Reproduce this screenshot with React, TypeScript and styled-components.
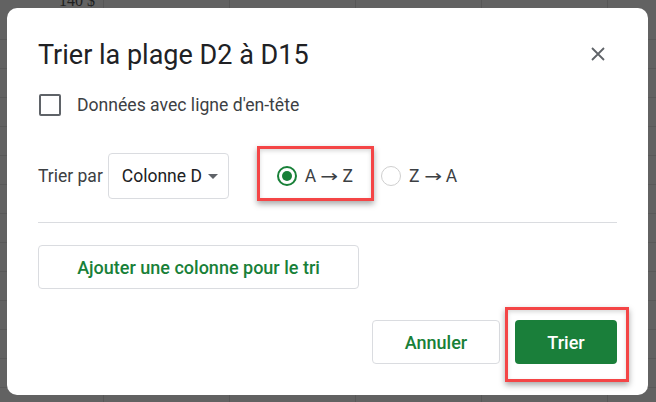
import React, { useState } from 'react';
import styled, { createGlobalStyle } from 'styled-components';

const GlobalStyle = createGlobalStyle`
  html, body {
    margin: 0;
    padding: 0;
    width: 656px;
    height: 402px;
    overflow: hidden;
  }
  body {
    font-family: Roboto, 'Liberation Sans', Arial, sans-serif;
    background-color: #626262;
    background-image:
      repeating-linear-gradient(90deg, transparent 0 103px, #575757 103px 104px, transparent 104px 126px),
      repeating-linear-gradient(0deg, transparent 0 28px, #595959 28px 29px);
    background-position: 0 0, 0 14px;
  }
`;

const Backdrop = styled.div`
  position: relative;
  width: 656px;
  height: 402px;
  padding: 8px 8px 7px 7px;
  box-sizing: border-box;
`;

const PeekText = styled.span`
  position: absolute;
  top: -8px;
  left: 59px;
  font-family: 'Liberation Serif', 'Times New Roman', serif;
  font-size: 16px;
  color: #1f1f1f;
`;

const Dialog = styled.div`
  position: relative;
  height: 100%;
  background: #ffffff;
  border-radius: 10px;
  padding: 31px 31px 0 31px;
  box-sizing: border-box;
  display: flex;
  flex-direction: column;
`;

const Header = styled.div`
  display: flex;
  align-items: center;
  justify-content: space-between;
  height: 32px;
`;

const Title = styled.h1`
  margin: 0;
  font-size: 27px;
  line-height: 32px;
  font-weight: 400;
  color: #202124;
`;

const CloseButton = styled.button`
  width: 24px;
  height: 24px;
  border: none;
  background: none;
  padding: 0;
  margin: -3px 7px 0 0;
  display: flex;
  align-items: center;
  justify-content: center;
  cursor: pointer;
`;

const CheckRow = styled.label`
  display: flex;
  align-items: center;
  gap: 16px;
  margin-top: 23px;
  font-size: 17.6px;
  line-height: 22px;
  color: #3c4043;
`;

const CheckBox = styled.span`
  width: 22px;
  height: 22px;
  box-sizing: border-box;
  border: 2px solid #5f6368;
  border-radius: 2px;
  margin-left: 1px;
`;

const SortRow = styled.div`
  display: flex;
  align-items: center;
  margin-top: 37px;
`;

const SortLabel = styled.span`
  font-size: 17.5px;
  color: #3c4043;
  margin-right: 5px;
`;

const Select = styled.div`
  display: flex;
  align-items: center;
  justify-content: space-between;
  width: 121px;
  height: 46px;
  box-sizing: border-box;
  border: 1px solid #dadce0;
  border-radius: 4px;
  padding: 0 10px 0 13px;
  font-size: 17.5px;
  color: #202124;
`;

const Caret = styled.span`
  width: 0;
  height: 0;
  border-left: 5px solid transparent;
  border-right: 5px solid transparent;
  border-top: 5px solid #5f6368;
`;

const RadioGroup = styled.div`
  display: flex;
  align-items: center;
  gap: 28px;
  margin-left: 48px;
`;

const Highlight = styled.span<{ $pad: string }>`
  position: relative;
  display: inline-flex;
  &::after {
    content: '';
    position: absolute;
    inset: ${({ $pad }) => $pad};
    border: 3px solid #f44546;
    box-shadow: 0 3px 6px rgba(0, 0, 0, 0.35), inset 0 2px 4px rgba(0, 0, 0, 0.15);
    pointer-events: none;
  }
`;

const RadioOption = styled.label`
  display: flex;
  align-items: center;
  gap: 8px;
  font-size: 17.5px;
  line-height: 21px;
  color: #3c4043;
  cursor: pointer;
`;

const Arrow = styled.span`
  display: inline-block;
  font-family: 'DejaVu Sans', sans-serif;
  font-size: 17px;
  transform: scaleX(1.25);
  margin: 0 6px;
`;

const RadioCircle = styled.span<{ $checked: boolean }>`
  width: 20px;
  height: 20px;
  box-sizing: border-box;
  border-radius: 50%;
  border: ${({ $checked }) => ($checked ? '2px solid #188038' : '1px solid #cfcfcf')};
  display: flex;
  align-items: center;
  justify-content: center;
  &::after {
    content: '';
    width: 10px;
    height: 10px;
    border-radius: 50%;
    background: #188038;
    display: ${({ $checked }) => ($checked ? 'block' : 'none')};
  }
`;

const Divider = styled.hr`
  border: none;
  border-top: 1px solid #dadce0;
  margin: 23px 0 0 0;
  width: 579px;
`;

const OutlineButton = styled.button<{ $width: number }>`
  width: ${({ $width }) => $width}px;
  height: 44px;
  border: 1px solid #dadce0;
  border-radius: 4px;
  background: #fff;
  color: #188038;
  font-family: inherit;
  font-size: 18px;
  font-weight: 500;
  cursor: pointer;
`;

const AddButton = styled(OutlineButton)`
  margin-top: 22px;
  align-self: flex-start;
`;

const Footer = styled.div`
  display: flex;
  justify-content: flex-end;
  align-items: center;
  gap: 15px;
  margin-top: 31px;
`;

const PrimaryButton = styled.button`
  width: 102px;
  height: 44px;
  border: none;
  border-radius: 4px;
  background: #1a7f3a;
  color: #fff;
  font-family: inherit;
  font-size: 18px;
  font-weight: 500;
  cursor: pointer;
`;

const CloseIcon = () => (
  <svg width="14" height="14" viewBox="0 0 14 14">
    <path d="M1 1L13 13M13 1L1 13" stroke="#5f6368" strokeWidth="1.8" />
  </svg>
);

export default function App() {
  const [order, setOrder] = useState<'asc' | 'desc'>('asc');

  return (
    <>
      <GlobalStyle />
      <Backdrop>
        <PeekText>140 $</PeekText>
        <Dialog>
          <Header>
            <Title>Trier la plage D2 à D15</Title>
            <CloseButton aria-label="Fermer">
              <CloseIcon />
            </CloseButton>
          </Header>

          <CheckRow>
            <CheckBox />
            Données avec ligne d'en-tête
          </CheckRow>

          <SortRow>
            <SortLabel>Trier par</SortLabel>
            <Select>
              Colonne D
              <Caret />
            </Select>
            <RadioGroup>
              <Highlight $pad="-20px -21px -14px -20px">
                <RadioOption onClick={() => setOrder('asc')}>
                  <RadioCircle $checked={order === 'asc'} />
                  <span>
                    A<Arrow>→</Arrow>Z
                  </span>
                </RadioOption>
              </Highlight>
              <RadioOption onClick={() => setOrder('desc')}>
                <RadioCircle $checked={order === 'desc'} />
                <span>
                  Z<Arrow>→</Arrow>A
                </span>
              </RadioOption>
            </RadioGroup>
          </SortRow>

          <Divider />

          <AddButton $width={321}>Ajouter une colonne pour le tri</AddButton>

          <Footer>
            <OutlineButton $width={128}>Annuler</OutlineButton>
            <Highlight $pad="-13px -12px -18px -10px">
              <PrimaryButton>Trier</PrimaryButton>
            </Highlight>
          </Footer>
        </Dialog>
      </Backdrop>
    </>
  );
}
